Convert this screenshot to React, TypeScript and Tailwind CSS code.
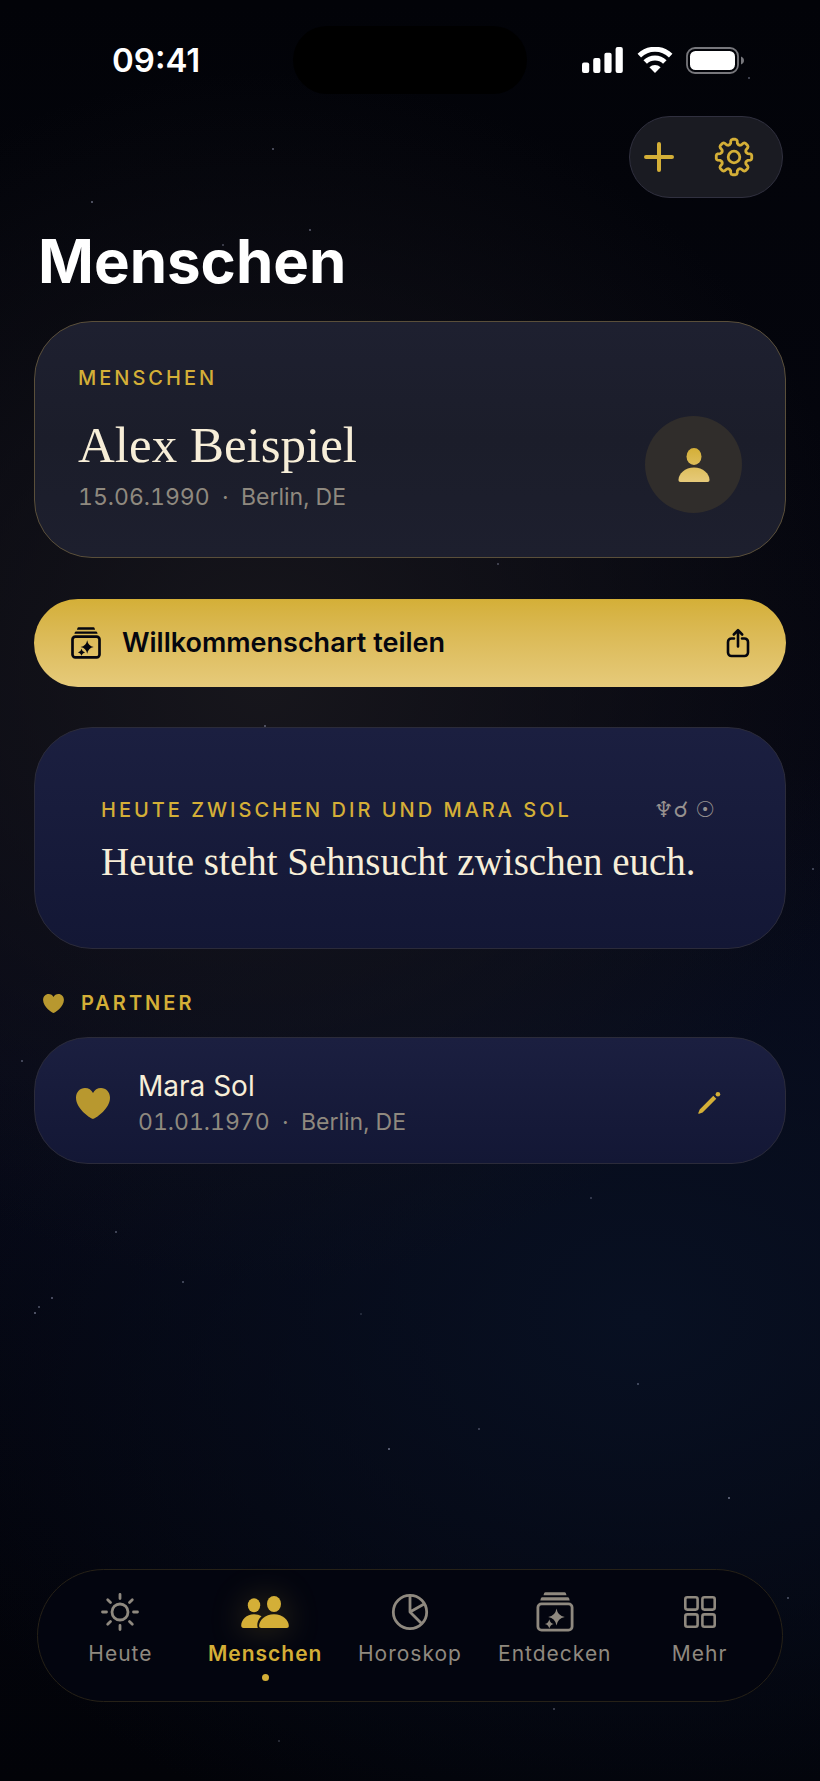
import type { ReactNode } from "react";

interface IconProps {
  className?: string;
  strokeWidth?: number;
}

interface Tab {
  label: string;
  icon: ReactNode;
  active?: boolean;
}

// x, y, radio, opacidad
const STARS = [
  [92, 202, 1, 0.5],
  [273, 149, 1, 0.45],
  [310, 230, 1, 0.45],
  [223, 245, 1, 0.35],
  [749, 78, 1, 0.4],
  [498, 564, 1, 0.35],
  [265, 726, 1, 0.45],
  [813, 869, 1, 0.4],
  [22, 1061, 1, 0.4],
  [591, 1198, 1, 0.3],
  [116, 1232, 1, 0.4],
  [183, 1282, 1, 0.4],
  [52, 1298, 1, 0.45],
  [39, 1307, 1, 0.4],
  [35, 1313, 1, 0.5],
  [361, 1314, 1, 0.2],
  [638, 1384, 1, 0.4],
  [479, 1429, 1, 0.35],
  [389, 1449, 1, 0.55],
  [729, 1498, 1, 0.55],
  [788, 1598, 1, 0.4],
  [554, 1709, 1, 0.35],
  [279, 1741, 1, 0.25],
];

// ── Iconos ──────────────────────────────────────────────────────────────────
function gearPath() {
  const point = (r: number, deg: number) => {
    const a = (deg * Math.PI) / 180;
    return `${(20 + r * Math.sin(a)).toFixed(2)} ${(20 - r * Math.cos(a)).toFixed(2)}`;
  };
  let d = "";
  for (let i = 0; i < 8; i++) {
    const c = i * 45;
    d += `${i === 0 ? "M" : "L"}${point(14, c - 14)}`;
    d += `L${point(16.6, c - 11)}Q${point(17.8, c - 9)} ${point(17.8, c - 5)}`;
    d += `L${point(17.8, c + 5)}Q${point(17.8, c + 9)} ${point(16.6, c + 11)}`;
    d += `L${point(14, c + 14)}Q${point(12, c + 22.5)} ${point(14, c + 31)}`;
  }
  return `${d}Z`;
}

function GearIcon({ className }: IconProps) {
  return (
    <svg viewBox="0 0 40 40" fill="none" stroke="currentColor" strokeWidth="2.8" strokeLinejoin="round" className={className}>
      <path d={gearPath()} />
      <circle cx="20" cy="20" r="5.8" />
    </svg>
  );
}

function StackIcon({ className, strokeWidth = 2.8 }: IconProps) {
  return (
    <svg viewBox="0 0 38 40" fill="currentColor" className={className}>
      <path d="M9.5.2h19a1.5 1.5 0 0 1 1.4 1l.6 2.100h-23l.6-2.100a1.500 1.500 0 0 1 1.400-1z" />
      <path d="M6.300 5.300h25.400a1.500 1.500 0 0 1 1.400 1l.6 2.100H4.300l.6-2.100a1.500 1.500 0 0 1 1.400-1z" />
      <rect x="1.900" y="11.900" width="34.200" height="26.200" rx="3.600" fill="none" stroke="currentColor" strokeWidth={strokeWidth} />
      <path d="M20.500 16.500q1.200 7.300 8.300 8.500-7.100 1.200-8.300 8.500-1.200-7.300-8.300-8.500 7.100-1.200 8.300-8.500z" />
      <path d="M13.300 27.200q.8 4 4.500 4.700-3.700.7-4.500 4.700-.8-4-4.500-4.700 3.700-.7 4.500-4.700z" />
    </svg>
  );
}

function ShareIcon({ className }: IconProps) {
  return (
    <svg viewBox="0 0 24 30" fill="none" stroke="currentColor" strokeWidth="2.6" strokeLinecap="round" strokeLinejoin="round" className={className}>
      <path d="M8 10.500H5.500A3.500 3.500 0 0 0 2 14v10.500A3.500 3.500 0 0 0 5.500 28h13a3.500 3.500 0 0 0 3.500-3.500V14a3.500 3.500 0 0 0-3.500-3.500H16" />
      <path d="M12 18.500V2.500M7.800 6.500 12 2.200l4.200 4.300" />
    </svg>
  );
}

function HeartIcon({ className }: IconProps) {
  return (
    <svg viewBox="0 0 34 31" fill="currentColor" className={className}>
      <path d="M17 31C15.500 31 0 21.500 0 9.800 0 4 4 0 9 0c3.600 0 6.500 1.900 8 5 1.500-3.100 4.400-5 8-5 5 0 9 4 9 9.800C34 21.500 18.500 31 17 31z" />
    </svg>
  );
}

function PersonIcon({ className }: IconProps) {
  return (
    <svg viewBox="0 0 32 34" className={className}>
      <defs>
        <linearGradient id="personGold" x1="0" y1="0" x2="0" y2="34" gradientUnits="userSpaceOnUse">
          <stop offset="0" stopColor="#d4af37" />
          <stop offset="1" stopColor="#e6ca7a" />
        </linearGradient>
      </defs>
      <g fill="url(#personGold)">
        <ellipse cx="16" cy="8.500" rx="7.500" ry="8.500" />
        <path d="M2.500 34C1.100 34 .5 33.200 .5 31.800 .5 26 7 19.500 16 19.500s15.500 6.500 15.500 12.300c0 1.400-.6 2.200-2 2.200z" />
      </g>
    </svg>
  );
}

function PencilIcon({ className }: IconProps) {
  return (
    <svg viewBox="0 0 24 24" fill="currentColor" className={className}>
      <path d="M16.300 4.800l3 3L5.600 21.400l-3.500 1.400c-.5.2-1-.3-.8-.8l1.400-3.600z" />
      <circle cx="20.900" cy="3.200" r="2.300" />
    </svg>
  );
}

function SunIcon() {
  return (
    <svg viewBox="0 0 38 38" fill="none" stroke="currentColor" strokeWidth="2.8" strokeLinecap="round" className="size-[38px]">
      <circle cx="19" cy="19" r="8" />
      <path d="M19 1.500v4M19 32.500v4M1.500 19h4M32.500 19h4M6.700 6.700l2.800 2.800M28.500 28.500l2.800 2.800M6.700 31.300l2.800-2.800M28.500 9.500l2.800-2.800" />
    </svg>
  );
}

function PeopleIcon() {
  return (
    <svg viewBox="0 0 48 32" fill="currentColor" className="h-8 w-12 drop-shadow-[0_0_16px_rgba(212,175,55,0.3)]">
      <ellipse cx="13" cy="9.300" rx="6.200" ry="7" />
      <path d="M20.500 20.300C18.500 19 16 18.300 13 18.300 5.500 18.300 .2 24 .2 29.500.2 31 1 32 2.500 32h14.300c-1.300-4 .2-8.500 3.700-11.700z" />
      <ellipse cx="33" cy="8" rx="7" ry="8" />
      <path d="M20.300 32c-1.400 0-2.200-.8-2.200-2.200 0-5.500 6-11.500 14.900-11.500s14.800 6 14.800 11.500c0 1.400-.7 2.200-2.200 2.200z" />
    </svg>
  );
}

function ChartIcon() {
  return (
    <svg viewBox="0 0 38 38" fill="none" stroke="currentColor" strokeWidth="2.8" strokeLinejoin="round" className="size-[38px]">
      <circle cx="19" cy="19" r="16.700" />
      <path d="M19 2.300V19L33.500 10.700M19 19l11.800 11.800" />
    </svg>
  );
}

function GridIcon() {
  return (
    <svg viewBox="0 0 32 32" fill="none" stroke="currentColor" strokeWidth="2.6" className="size-8">
      <rect x="1.300" y="1.300" width="12.300" height="12.300" rx="2" />
      <rect x="18.400" y="1.300" width="12.300" height="12.300" rx="2" />
      <rect x="1.300" y="18.400" width="12.300" height="12.300" rx="2" />
      <rect x="18.400" y="18.400" width="12.300" height="12.300" rx="2" />
    </svg>
  );
}

const TABS: Tab[] = [
  { label: "Heute", icon: <SunIcon /> },
  { label: "Menschen", icon: <PeopleIcon />, active: true },
  { label: "Horoskop", icon: <ChartIcon /> },
  { label: "Entdecken", icon: <StackIcon className="h-10 w-[38px]" /> },
  { label: "Mehr", icon: <GridIcon /> },
];

// ── Secciones ───────────────────────────────────────────────────────────────
function Sky() {
  return (
    <svg
      aria-hidden="true"
      viewBox="0 0 820 1781"
      preserveAspectRatio="xMidYMin slice"
      className="pointer-events-none absolute inset-0 size-full"
    >
      {STARS.map(([x, y, r, opacity]) => (
        <circle key={`${x}-${y}`} cx={x} cy={y} r={r} fill="#c3c8e6" opacity={opacity} />
      ))}
    </svg>
  );
}

function StatusBar() {
  return (
    <div className="grid grid-cols-[1fr_auto_1fr] items-center pt-[26px]">
      <span className="pl-28 text-[33px] leading-10 font-semibold text-white">09:41</span>
      <div className="h-[68px] w-[234px] rounded-full bg-black" />
      <div className="flex items-center justify-end gap-[13px] pr-[75px] text-white">
        <svg viewBox="0 0 42 26" fill="currentColor" className="h-[26px] w-[42px]">
          <rect x="0" y="15.500" width="7.200" height="10.500" rx="2" />
          <rect x="11.200" y="11" width="7.200" height="15" rx="2" />
          <rect x="22.400" y="5.800" width="7.200" height="20.200" rx="2" />
          <rect x="33.600" y="0" width="7.200" height="26" rx="2" />
        </svg>
        <svg viewBox="0 0 36 26" className="h-[26px] w-9">
          <g fill="none" stroke="currentColor" strokeWidth="5">
            <path d="M2.300 8.600a22.500 22.500 0 0 1 31.400 0" />
            <path d="M8.200 15a14 14 0 0 1 19.600 0" />
          </g>
          <path d="M18 26l-5.600-5.700a8.200 8.200 0 0 1 11.200 0z" fill="currentColor" />
        </svg>
        <svg viewBox="0 0 59 27" className="h-[27px] w-[59px]">
          <rect x="1" y="1" width="51" height="25" rx="8" fill="none" stroke="#77777c" strokeWidth="1.800" />
          <rect x="4" y="4" width="45" height="19" rx="5.500" fill="currentColor" />
          <path d="M55 9.500c1.800.7 3 2.200 3 4s-1.200 3.300-3 4z" fill="#77777c" />
        </svg>
      </div>
    </div>
  );
}

function ProfileCard() {
  return (
    <section className="mt-[22px] rounded-[58px] border border-[#5a4f3a] bg-linear-to-b from-[#1e2030] via-[#1b1d2a] to-[#1d1f2e] px-[43px] py-11">
      <h2 className="text-[20px] leading-6 font-medium tracking-[3px] text-[#d4af37] uppercase">Menschen</h2>
      <div className="mt-[26px] flex items-center justify-between gap-4">
        <div>
          <p className="font-['Liberation_Serif',serif] text-[51px] leading-14 text-[#f7eed8]">Alex Beispiel</p>
          <p className="mt-2 text-[23px] leading-8 whitespace-pre text-[#8f897f] tabular-nums">
            {"15.06.1990  ·  Berlin, DE"}
          </p>
        </div>
        <div className="flex size-[97px] shrink-0 items-center justify-center rounded-full bg-[#302d2b]">
          <PersonIcon className="h-[34px] w-8" />
        </div>
      </div>
    </section>
  );
}

function TodayCard() {
  return (
    <section className="mt-10 rounded-[58px] border border-[#2b2b3a] bg-linear-to-b from-[#1b1f40] to-[#131735] px-[66px] py-[66px]">
      <div className="flex items-center justify-between">
        <h2 className="text-[20px] leading-8 font-medium tracking-[3px] text-[#d4af37] uppercase">
          Heute zwischen dir und Mara Sol
        </h2>
        <span className="pr-1 font-['DejaVu_Sans',sans-serif] text-[22px] leading-8 whitespace-nowrap text-[#96918f]">
          ♆☌ ☉
        </span>
      </div>
      <p className="mt-4 font-['Liberation_Serif',serif] text-[39px] leading-10 text-[#f7eed8]">
        Heute steht Sehnsucht zwischen euch.
      </p>
    </section>
  );
}

function PartnerSection() {
  return (
    <section className="mt-[42px]">
      <h2 className="flex items-center gap-[17px] pl-[9px] text-[20px] leading-6 font-semibold tracking-[3px] text-[#d4af37] uppercase">
        <HeartIcon className="h-[19px] w-[21px] text-[#b8982f]" />
        Partner
      </h2>
      <div className="mt-[22px] flex items-center rounded-[54px] border border-[#2b2b3a] bg-linear-to-b from-[#1b1f40] to-[#131735] pt-[30px] pr-16 pb-[25px] pl-[41px]">
        <HeartIcon className="h-[31px] w-[34px] shrink-0 text-[#b8982f]" />
        <div className="ml-7 flex-1">
          <p className="text-[28px] leading-9 text-[#f7eed8]">Mara Sol</p>
          <p className="mt-0.5 text-[23px] leading-8 whitespace-pre text-[#8f897f] tabular-nums">
            {"01.01.1970  ·  Berlin, DE"}
          </p>
        </div>
        <button type="button" aria-label="Bearbeiten" className="cursor-pointer text-[#d4af37]">
          <PencilIcon className="size-6" />
        </button>
      </div>
    </section>
  );
}

function TabBar() {
  return (
    <nav className="mx-[37px] mt-auto mb-[79px] flex rounded-full border border-[#262117] bg-[#03050f] px-2.5 pt-5 pb-5">
      {TABS.map((tab) => (
        <a
          key={tab.label}
          href="#"
          aria-current={tab.active ? "page" : undefined}
          className={`flex flex-1 flex-col items-center text-[21px] leading-7 tracking-[1px] ${
            tab.active ? "font-semibold text-[#d4af37]" : "text-[#8f897f]"
          }`}
        >
          <span className="flex h-11 items-center">{tab.icon}</span>
          <span className="mt-1.5">{tab.label}</span>
          <span className={`mt-1.5 size-[7px] rounded-full ${tab.active ? "bg-[#d4af37]" : ""}`} />
        </a>
      ))}
    </nav>
  );
}

export default function App() {
  return (
    <div className="relative isolate flex min-h-screen flex-col bg-[#020308] bg-[radial-gradient(ellipse_75%_34%_at_32%_38%,#17161c_0%,transparent_100%),radial-gradient(ellipse_95%_32%_at_78%_74%,#081022_0%,transparent_100%),linear-gradient(180deg,#020308_0%,#05060f_35%,#070918_60%,#03040c_85%,#020308_100%)] font-[Inter,sans-serif]">
      <Sky />
      <div className="relative flex flex-1 flex-col">
        <StatusBar />
        <main className="px-[34px] pb-10">
          <div className="mt-[22px] mr-[3px] flex justify-end">
            <div className="flex items-center gap-10 rounded-full border border-[#30303f] bg-[#1a1b22] py-5 pr-7 pl-[14px] text-[#d4af37]">
              <button type="button" aria-label="Person hinzufügen" className="cursor-pointer">
                <svg viewBox="0 0 30 30" fill="none" stroke="currentColor" strokeWidth="4" strokeLinecap="round" className="size-[30px]">
                  <path d="M15 2v26M2 15h26" />
                </svg>
              </button>
              <button type="button" aria-label="Einstellungen" className="cursor-pointer">
                <GearIcon className="size-10" />
              </button>
            </div>
          </div>
          <h1 className="mt-[26px] mb-[23px] pl-1 text-[60px] leading-[74px] font-bold text-white">Menschen</h1>
          <ProfileCard />
          <button
            type="button"
            className="mt-[41px] flex w-full cursor-pointer items-center rounded-full bg-linear-to-b from-[#d4af37] to-[#e6ca7a] py-6 pr-9 pl-[37px] text-left text-[#05060f]"
          >
            <StackIcon className="h-8 w-[30px]" strokeWidth={3.4} />
            <span className="ml-[21px] flex-1 text-[27px] leading-10 font-semibold">Willkommenschart teilen</span>
            <ShareIcon className="h-[30px] w-6" />
          </button>
          <TodayCard />
          <PartnerSection />
        </main>
        <TabBar />
      </div>
    </div>
  );
}
